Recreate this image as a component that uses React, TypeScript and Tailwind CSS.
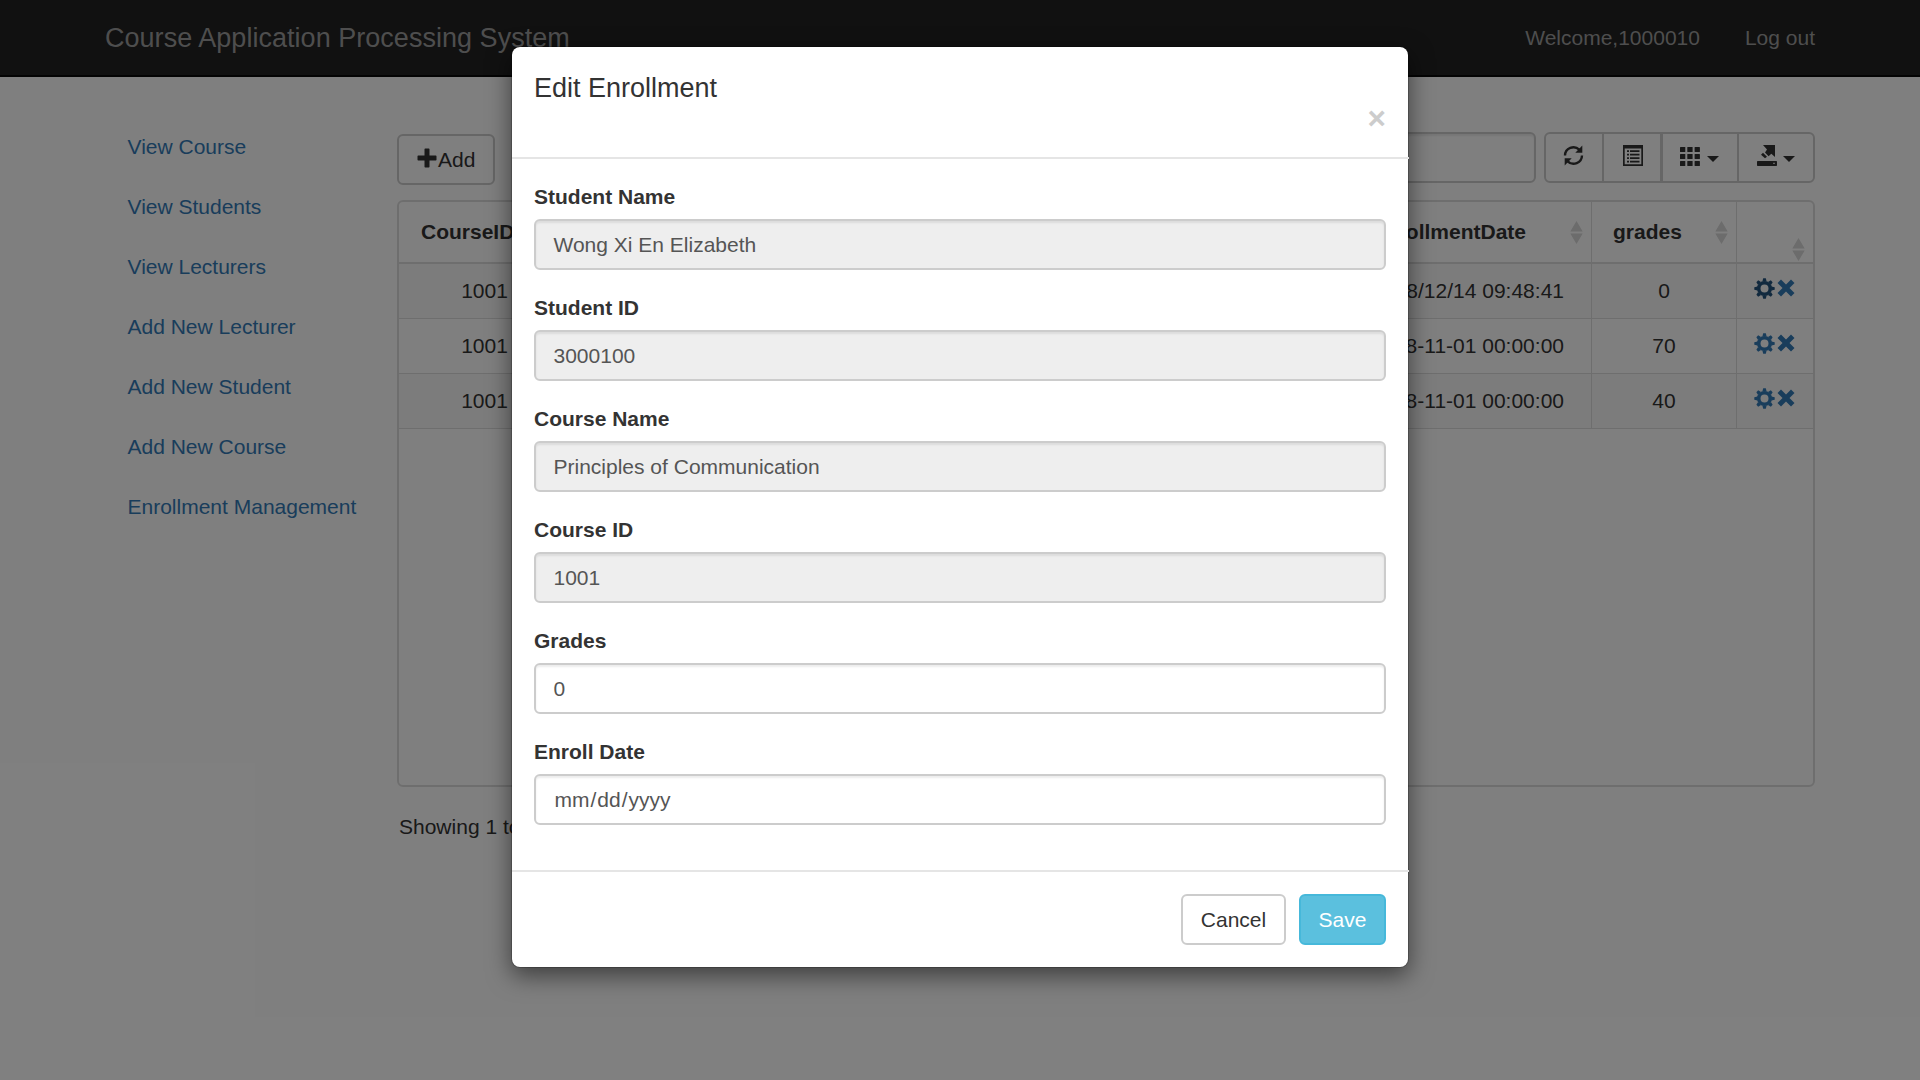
import React from "react";

const PlusIcon = () => (
  <svg width="20" height="20" viewBox="0 0 20 20" fill="currentColor">
    <path d="M8.2 0.5h3.6q.7 0 .7.7V7.5h6.3q.7 0 .7.7v3.6q0 .7-.7.7H12.500v6.300q0 .7-.7.7H8.200q-.7 0-.7-.7V12.500H1.200q-.7 0-.7-.7V8.200q0-.7.7-.7H7.500V1.200q0-.7.7-.7z" />
  </svg>
);

const RefreshIcon = () => (
  <svg width="21" height="21" viewBox="0 0 21 21" fill="none" stroke="currentColor" strokeWidth="2.4">
    <path d="M2 10.500A8.400 8.400 0 0 1 16.300 4.700" />
    <path d="M19 10.500A8.400 8.400 0 0 1 4.700 16.300" />
    <path d="M19.300 0.500V7.700H12.300z" fill="currentColor" stroke="none" />
    <path d="M1.700 20.500V13.300H8.700z" fill="currentColor" stroke="none" />
  </svg>
);

const ListAltIcon = () => (
  <svg width="20" height="21" viewBox="0 0 20 21" fill="currentColor">
    <path fillRule="evenodd" d="M0 0H20V21H0zM1.700 3.500V19.300H18.300V3.500z" />
    <path d="M4 5.200h2v1.800H4zM7 5.200h9.500v1.800H7zM4 8.700h2v1.800H4zM7 8.700h9.500v1.800H7zM4 12.200h2v1.800H4zM7 12.200h9.500v1.800H7zM4 15.700h2v1.800H4zM7 15.700h9.500v1.800H7z" />
  </svg>
);

const GridIcon = () => (
  <svg width="20" height="19" viewBox="0 0 20 19" fill="currentColor">
    {[0, 7, 14].map((y) =>
      [0, 7.3, 14.6].map((x) => <rect key={`${x}-${y}`} x={x} y={y} width="5.300" height="5" rx=".5" />)
    )}
  </svg>
);

const ExportIcon = () => (
  <svg width="20" height="21" viewBox="0 0 20 21" fill="currentColor">
    <path d="M6 0H18V12L14.300 8.700L11.600 11.200L8 7.500L10 4.500z" />
    <path d="M6 7.800L10 11.800L8 13.300L4 9.700z" />
    <path fillRule="evenodd" d="M.7 16H19.300q.7 0 .7.700V20.300q0 .7-.7.700H.7q-.7 0-.7-.7V16.700q0-.7.7-.7zM16.300 17.700v1.300h1.400v-1.300z" />
  </svg>
);

const Caret = () => (
  <svg width="12" height="6" viewBox="0 0 12 6" fill="currentColor">
    <path d="M0 0H12L6 6z" />
  </svg>
);

const GearIcon = () => (
  <svg width="21" height="21" viewBox="-10.500 -10.500 21 21" fill="none">
    <circle r="5.800" stroke="currentColor" strokeWidth="3.600" />
    {[0, 45, 90, 135, 180, 225, 270, 315].map((a) => (
      <path key={a} d="M-2.100 -7L-1.300 -10.200H1.300L2.100 -7z" fill="currentColor" transform={`rotate(${a})`} />
    ))}
  </svg>
);

const RemoveIcon = () => (
  <svg width="18" height="18" viewBox="0 0 18 18" fill="currentColor">
    <path d="M4 .6L9 5.500L14 .6L17.500 4L12.500 9L17.500 14L14 17.500L9 12.500L4 17.500L.5 14L5.500 9L.5 4z" />
  </svg>
);

const SortIcon = () => (
  <svg width="13" height="23" viewBox="0 0 13 23" fill="#d8d8d8">
    <path d="M6.500 0L12.700 10.600H.3zM.3 12.400H12.700L6.500 23z" />
  </svg>
);

const links = [
  "View Course",
  "View Students",
  "View Lecturers",
  "Add New Lecturer",
  "Add New Student",
  "Add New Course",
  "Enrollment Management",
];

const rows = [
  { course: "1001", date: "2018/12/14 09:48:41", grade: "0", active: true },
  { course: "1001", date: "2018-11-01 00:00:00", grade: "70", active: false },
  { course: "1001", date: "2018-11-01 00:00:00", grade: "40", active: false },
];

const DateMask = () => (
  <span className="ml-[1px]">
    mm<span className="px-[1px]">/</span>dd<span className="px-[1px]">/</span>yyyy
  </span>
);

const fields = [
  { label: "Student Name", value: "Wong Xi En Elizabeth", disabled: true },
  { label: "Student ID", value: "3000100", disabled: true },
  { label: "Course Name", value: "Principles of Communication", disabled: true },
  { label: "Course ID", value: "1001", disabled: true },
  { label: "Grades", value: "0", disabled: false },
  { label: "Enroll Date", value: <DateMask />, disabled: false },
];

const columns = "grid grid-cols-[171px_1022px_145px_76px]";

function Navbar() {
  return (
    <nav className="flex h-[77px] items-center justify-between border-b-2 border-[#080808] bg-[#222] pr-[105px] pl-[105px] text-[#9d9d9d]">
      <span className="text-[27px] leading-[30px] tracking-[0.03px]">Course Application Processing System</span>
      <div className="flex gap-[45px]">
        <span>Welcome,1000010</span>
        <span>Log out</span>
      </div>
    </nav>
  );
}

function Toolbar() {
  return (
    <div className="flex h-[53px] items-start justify-between">
      <button className="mt-[2px] flex h-[51px] w-[98px] items-center rounded-[6px] border-2 border-[#ccc] bg-white pl-[18px]">
        <span className="-mt-[3px]"><PlusIcon /></span>
        <span className="ml-[1px]">Add</span>
      </button>
      <div className="flex gap-[8px]">
        <div className="h-[51px] w-[300px] rounded-[6px] border-2 border-[#ccc] bg-white shadow-[inset_0_2px_2px_rgba(0,0,0,0.075)]" />
        <div className="flex h-[51px] w-[271px] rounded-[6px] border-2 border-[#ccc] bg-white">
          <button className="w-[58px] border-r-2 border-[#ccc] pb-[4px] pl-[17px]"><RefreshIcon /></button>
          <button className="w-[59px] border-r-[3px] border-[#ccc] pb-[4px] pl-[19px]"><ListAltIcon /></button>
          <button className="flex w-[76px] items-center gap-[7px] border-r-2 border-[#ccc] pb-[2px] pl-[17px]">
            <GridIcon />
            <span className="mt-[5px]"><Caret /></span>
          </button>
          <button className="flex items-center gap-[6px] pb-[4px] pl-[18px]">
            <ExportIcon />
            <span className="mt-[7px]"><Caret /></span>
          </button>
        </div>
      </div>
    </div>
  );
}

function EnrollmentTable() {
  return (
    <div className="mt-[15px] h-[587px] overflow-hidden rounded-[6px] border-2 border-[#ddd]">
      <div className={`${columns} h-[62px] border-b-2 border-[#ddd] font-bold`}>
        <div className="flex items-center border-r border-[#ddd] pl-[22px]">CourseID</div>
        <div className="flex items-center justify-end gap-[44px] border-r border-[#ddd] pr-[8px]">
          <span className="whitespace-nowrap">EnrollmentDate</span>
          <SortIcon />
        </div>
        <div className="flex items-center justify-between border-r border-[#ddd] pr-[8px] pl-[21px]">
          grades
          <SortIcon />
        </div>
        <div className="flex items-end justify-end pr-[8px] pb-[1px]"><SortIcon /></div>
      </div>
      {rows.map((row, i) => (
        <div key={i} className={`${columns} h-[55px] border-b border-[#ddd] odd:bg-white even:bg-[#f9f9f9]`}>
          <div className="flex items-center justify-center border-r border-[#ddd] pl-[1px]">{row.course}</div>
          <div className="flex items-center justify-end border-r border-[#ddd] pr-[27px]">{row.date}</div>
          <div className="flex items-center justify-center border-r border-[#ddd]">{row.grade}</div>
          <div className="flex items-center pb-[6px] pl-[17px] text-[#337ab7]">
            <span className={row.active ? "text-[#23527c]" : ""}><GearIcon /></span>
            <span className="ml-[2px]"><RemoveIcon /></span>
          </div>
        </div>
      ))}
    </div>
  );
}

function EditDialog() {
  return (
    <div className="absolute top-[46px] left-[511px] w-[898px] rounded-[9px] border border-black/20 bg-white bg-clip-padding text-[#333] shadow-[0_8px_23px_rgba(0,0,0,0.5)]">
      <div className="-mr-px h-[112px] border-b-2 border-[#e5e5e5] pt-[22px] pr-[23px] pl-[22px]">
        <h4 className="text-[27px] leading-[39px]">Edit Enrollment</h4>
        <div className="flex justify-end">
          <button className="-mt-[6px] text-[31.5px] leading-[32px] font-bold text-[#ccc]">×</button>
        </div>
      </div>
      <div className="h-[711px] px-[22px] pt-[22px]">
        {fields.map((f) => (
          <div key={f.label} className="mb-[22px]">
            <label className="block h-[38px] pt-[1px] font-bold">{f.label}</label>
            <div
              className={`flex h-[51px] items-center rounded-[6px] border-2 border-[#ccc] px-[17.500px] text-[#555] shadow-[inset_0_2px_2px_rgba(0,0,0,0.075)] ${
                f.disabled ? "bg-[#eee]" : "bg-white"
              }`}
            >
              <span>{f.value}</span>
            </div>
          </div>
        ))}
      </div>
      <div className="-mr-px flex h-[97px] justify-end gap-[13px] border-t-2 border-[#e5e5e5] pt-[22px] pr-[23px]">
        <button className="h-[51px] w-[105px] rounded-[6px] border-2 border-[#ccc] bg-white">Cancel</button>
        <button className="h-[51px] w-[87px] rounded-[6px] border-2 border-[#46b8da] bg-[#5bc0de] text-white">Save</button>
      </div>
    </div>
  );
}

export default function App() {
  return (
    <div className="relative h-[1080px] w-[1920px] overflow-hidden bg-white font-['Liberation_Sans',Arial,sans-serif] text-[21px] leading-[30px] text-[#333]">
      <Navbar />
      <div className="flex">
        <aside className="w-[397px] pt-[40px] pl-[127.500px] text-[#337ab7]">
          {links.map((l) => (
            <a key={l} className="block py-[15px] whitespace-nowrap">{l}</a>
          ))}
        </aside>
        <main className="w-[1418px] pt-[55px]">
          <Toolbar />
          <EnrollmentTable />
          <p className="mt-[25px] pl-[2px]">Showing 1 to 3 of 3 rows</p>
        </main>
      </div>
      <div className="absolute inset-0 bg-black/50" />
      <EditDialog />
    </div>
  );
}
